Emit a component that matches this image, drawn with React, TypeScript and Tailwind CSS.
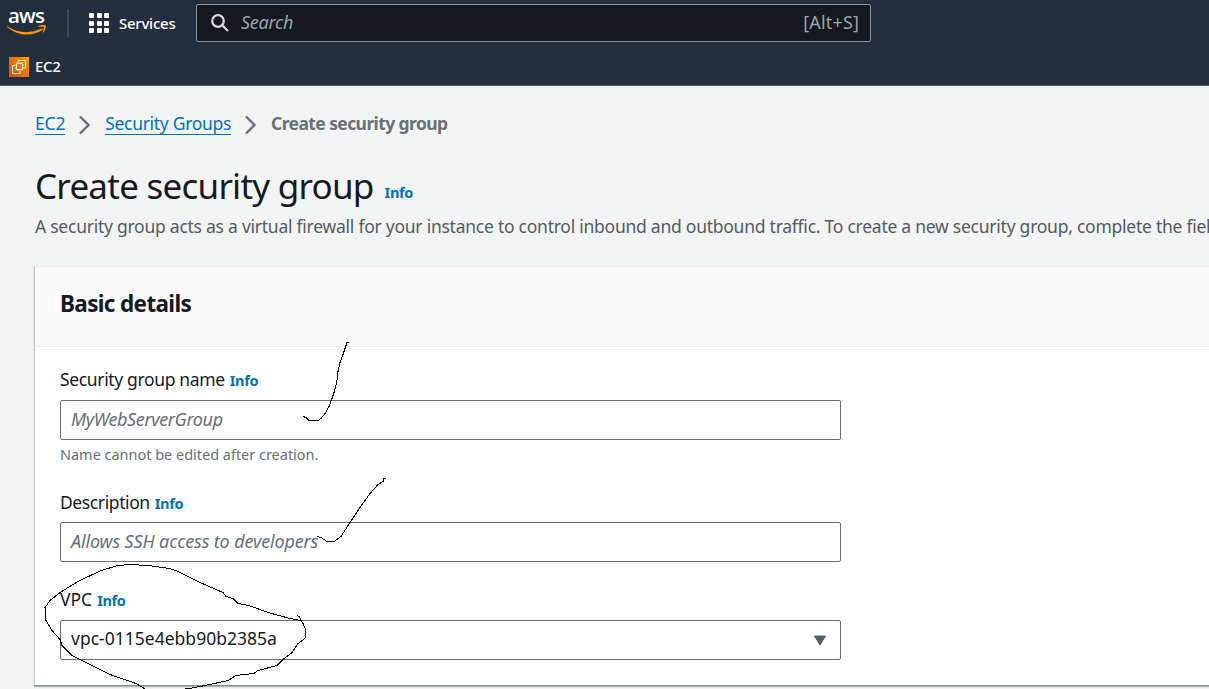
import type { ReactNode } from "react";

function Info({ className = "" }: { className?: string }) {
  return (
    <a className={`text-[14.5px] font-bold tracking-[-0.35px] text-[#0073bb] ${className}`}>Info</a>
  );
}

function Chevron() {
  return (
    <svg className="mx-[14px] mt-[1px] shrink-0" width="12" height="20" viewBox="0 0 12 20" fill="none">
      <path d="M1 1.5 L9.5 10 L1 18.5" stroke="#687078" strokeWidth="2.4" />
    </svg>
  );
}

function Label({ children }: { children: ReactNode }) {
  return (
    <div className="flex h-[24px] items-baseline gap-[5px] leading-[24px] whitespace-nowrap">
      {children}
      <Info />
    </div>
  );
}

function Box({ children }: { children: ReactNode }) {
  return (
    <div className="flex h-[40px] w-[781px] items-center justify-between rounded-[2px] border border-[#687078] bg-white pr-[13px] pl-[10px] whitespace-nowrap">
      {children}
    </div>
  );
}

function Header() {
  return (
    <header className="h-[86px] border-b border-[#545b64] bg-[#232f3e] text-white">
      <div className="flex h-[46px] items-center">
        <div className="relative ml-[7px] h-[30px] w-[41px]">
          <span className="absolute -top-[3px] left-[1px] font-['Open_Sans','Noto_Sans',sans-serif] text-[20.5px] leading-[20px] font-semibold tracking-[-0.8px]">
            aws
          </span>
          <svg className="absolute top-[16px] left-0" width="41" height="12" viewBox="0 0 41 12">
            <path d="M.4 2.2C11 9.6 24 9.8 34.4 4.6c1.2-.5 2 .6.9 1.5C25 13.3 9.500 11.500.3 2.900c-.5-.5-.3-.9.1-.7Z" fill="#f90" />
            <path d="M31.500 2.200c1.400-1.200 6-1.600 7-.7.900 1-.2 5.200-2.300 7-.4.3-.7.100-.6-.3.500-1.300 1.700-4.100 1.200-4.900-.6-.8-3.500-.5-4.900-.4-.5 0-.6-.4-.4-.7Z" fill="#f90" />
          </svg>
        </div>
        <div className="ml-[19px] h-[28px] w-[2px] bg-[#3f4854]" />
        <div className="ml-[20px] grid grid-cols-3 gap-[2.500px]">
          {Array.from({ length: 9 }, (_, i) => (
            <span key={i} className="h-[5px] w-[5px] rounded-[1px] bg-white" />
          ))}
        </div>
        <span className="ml-[10px] w-[77px] text-[15px] font-medium tracking-[-0.25px] whitespace-nowrap">Services</span>
        <div className="flex h-[38px] w-[675px] items-center rounded-[2px] border border-[#879596] bg-[#16191f] pr-[11px] pb-[1px] pl-[14px] text-[18px] text-[#95a5a6]">
          <svg width="18" height="18" viewBox="0 0 18 18" fill="none" stroke="#d5dbdb" strokeWidth="2.200">
            <circle cx="7" cy="7" r="5.800" />
            <path d="M11.200 11.200 L17 17" />
          </svg>
          <span className="ml-[12px] flex-1 tracking-[-0.25px] italic">Search</span>
          <span className="tracking-[0.15px]">[Alt+S]</span>
        </div>
      </div>
      <div className="flex h-[39px] items-center pt-[3px] pl-[9px]">
        <svg width="20" height="20" viewBox="0 0 20 20" fill="none">
          <defs>
            <linearGradient id="ec2" x1="0" y1="20" x2="20" y2="0" gradientUnits="userSpaceOnUse">
              <stop stopColor="#c8511b" />
              <stop offset="1" stopColor="#f90" />
            </linearGradient>
          </defs>
          <path d="M0 0h20v20H0z" fill="url(#ec2)" />
          <g stroke="#fff" strokeWidth=".8">
            <path d="M7.500 6.500h6v6h-6zM9 6.500V5M12 6.500V5M9 12.500V14M12 12.500V14M7.500 8H6M7.500 11H6M13.500 8H15M13.500 11H15" />
            <path d="M6 8.500H3.500v8H11V14M9 5V3.500h7.500V11H15" />
          </g>
        </svg>
        <span className="ml-[6px] pb-[2px] text-[15px] font-medium tracking-[-0.3px]">EC2</span>
      </div>
    </header>
  );
}

function Annotations() {
  return (
    <svg
      className="pointer-events-none absolute top-0 left-0"
      width="1209"
      height="689"
      viewBox="0 0 1209 689"
      fill="none"
      stroke="#000"
      strokeWidth="1"
      shapeRendering="crispEdges"
    >
      <g transform="translate(0 0.5)">
        <path d="M303 416L306 417L309 420H318L321 418L325 413L329 406L332 398L335 389L337 380L338 371L340 362L343 354L346 345L347 342H349" />
        <path d="M317 536L321 537L327 541H334L341 536L350 522L360 507L370 493L378 484L383 481L384 478H386" />
        <path d="M146 689L136 683L110 674L90 664L72 655L62 645L60 639L52 630L46 620L45 607L50 600L60 592L78 581L101 570L118 565L130 564L148 565L170 568L178 571L200 582L223 592L226 596L233 598L238 603L249 605L268 612L290 618L301 620" />
        <path d="M297 615L299 616L303 623L306 630L305 638L298 643L292 652L283 659L277 665L258 670L254 673L236 675L228 680L205 685L190 688L181 689" />
      </g>
    </svg>
  );
}

export default function App() {
  return (
    <div className="relative h-[689px] w-[1209px] overflow-hidden bg-[#f2f3f3] font-['Noto_Sans',sans-serif] text-[17.500px] text-[#16191f]">
      <Header />
      <main>
        <nav className="mt-[24px] ml-[35px] flex h-[28px] items-center whitespace-nowrap">
          <a className="border-b border-[#0073bb] leading-[21px] tracking-[-0.2px] text-[#0073bb]">EC2</a>
          <Chevron />
          <a className="border-b border-[#0073bb] leading-[21px] tracking-[-0.3px] text-[#0073bb]">Security Groups</a>
          <Chevron />
          <span className="pb-[2px] font-bold tracking-[-0.6px] text-[#687078]">Create security group</span>
        </nav>
        <div className="mt-[24px] ml-[35px] flex h-[48px] items-baseline gap-[11px] leading-[48px] whitespace-nowrap">
          <h1 className="text-[35px] tracking-[-0.75px]">Create security group</h1>
          <Info className="relative -top-px" />
        </div>
        <p className="mt-[2px] ml-[35px] h-[29px] leading-[28px] tracking-[-0.250px] whitespace-nowrap text-[#545b64]">
          A security group acts as a virtual firewall for your instance to control inbound and outbound traffic. To create a new security group, complete the fields below.
        </p>
        <section className="mt-[25px] ml-[34px] h-[420px] border-t border-b border-l border-t-[#eaeded] border-b-[#879596] border-l-[#c2c8c8] bg-white shadow-[0_1px_1px_0_rgba(0,28,36,0.300)]">
          <div className="flex h-[80px] items-center border-b border-[#eaeded] bg-[#fafafa] pb-[6px] pl-[25px]">
            <h2 className="text-[22.5px] font-bold tracking-[-0.65px]">Basic details</h2>
          </div>
          <div className="pt-[20px] pl-[25px]">
            <Label><span className="tracking-[-0.35px]">Security group name</span></Label>
            <div className="mt-[9px]">
              <Box><span className="pb-[2px] text-[18px] tracking-[-0.38px] text-[#687078] italic">MyWebServerGroup</span></Box>
            </div>
            <p className="mt-[3px] h-[23px] text-[14.500px] leading-[22px] tracking-[-0.02px] text-[#687078]">Name cannot be edited after creation.</p>
            <div className="mt-[24px]">
              <Label><span className="tracking-[-0.4px]">Description</span></Label>
            </div>
            <div className="mt-[8px]">
              <Box><span className="pb-[2px] text-[18px] tracking-[-0.15px] text-[#687078] italic">Allows SSH access to developers</span></Box>
            </div>
            <div className="mt-[25px]">
              <Label><span className="tracking-[0px]">VPC</span></Label>
            </div>
            <div className="mt-[9px]">
              <Box>
                <span className="pb-[3px] tracking-[0.010px]">vpc-0115e4ebb90b2385a</span>
                <svg width="14" height="11" viewBox="0 0 14 11"><path d="M1.500 1h11L7 10z" fill="#545b64" stroke="#545b64" strokeLinejoin="round" /></svg>
              </Box>
            </div>
          </div>
        </section>
      </main>
      <Annotations />
    </div>
  );
}
